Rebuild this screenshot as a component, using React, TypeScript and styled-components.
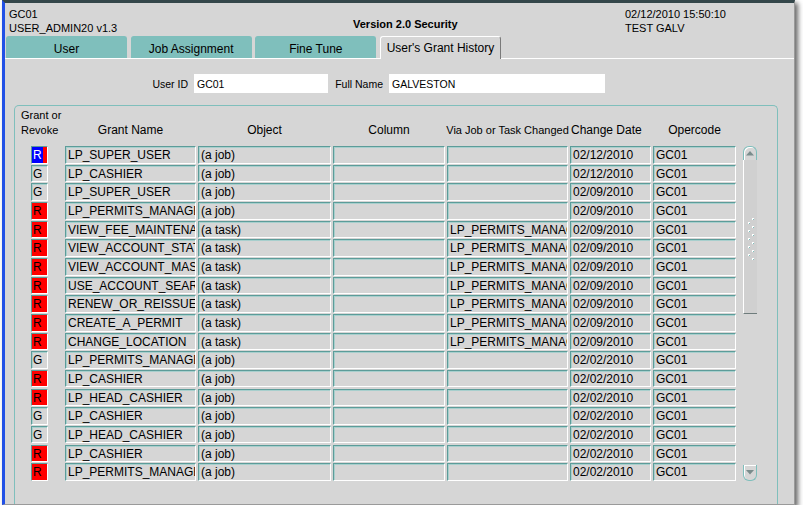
import React from "react";
import styled, { createGlobalStyle } from "styled-components";

const GlobalStyle = createGlobalStyle`
  html, body { margin: 0; padding: 0; background: #ffffff; }
  body { font-family: "Liberation Sans", Arial, sans-serif; color: #000; }
  * { box-sizing: border-box; }
`;

const BG = "#d6d6d6";
const TEAL = "#7fbfbc";
const TEAL_DARK = "#5c9c99";
const COLS = "43px 131px 133px 112px 121px 81px 83px";

const Window = styled.div`
  margin-left: 2px;
  width: 793px;
  height: 505px;
  background: ${BG};
  border-top: 3px solid #34474a;
  border-left: 3px solid #2150e6;
  border-right: 1px solid #9a9a9a;
  border-bottom: 1px solid #9a9a9a;
  box-shadow: 3px 3px 5px rgba(0, 0, 0, 0.6);
  display: flex;
  flex-direction: column;
  overflow: hidden;
`;

const Header = styled.div`
  display: grid;
  grid-template-columns: 344px 272px 1fr;
  height: 33px;
  padding: 4px 0 0 4px;
  font-size: 11px;
  line-height: 14px;
`;

const InfoBlock = styled.div`
  display: flex;
  flex-direction: column;
`;

const Title = styled.div`
  font-weight: bold;
  padding-top: 10px;
`;

const TabStrip = styled.div`
  display: flex;
  align-items: flex-end;
  height: 23px;
  padding-left: 1px;
  border-bottom: 1px solid #ffffff;
`;

const Tab = styled.div<{ $active?: boolean }>`
  width: 121px;
  margin-right: 3.67px;
  height: ${(p) => (p.$active ? "23px" : "22px")};
  margin-bottom: ${(p) => (p.$active ? "-1px" : "0")};
  background: ${(p) => (p.$active ? BG : TEAL)};
  border-radius: 3px 3px 0 0;
  border-top: 1px solid ${(p) => (p.$active ? "#ffffff" : TEAL)};
  border-left: 1px solid ${(p) => (p.$active ? "#ffffff" : TEAL)};
  border-right: 1px solid ${(p) => (p.$active ? "#7a7a7a" : TEAL)};
  display: flex;
  align-items: center;
  justify-content: center;
  font-size: 12px;
  padding-top: ${(p) => (p.$active ? "0" : "2px")};
`;

const Panel = styled.div`
  flex: 1;
  display: flex;
  flex-direction: column;
  padding-top: 15px;
  min-height: 0;
`;

const IdRow = styled.div`
  display: grid;
  grid-template-columns: 40px 134px 49px 216px;
  column-gap: 6px;
  padding-left: 143px;
  height: 19px;
  align-items: center;
`;

const IdLabel = styled.div`
  font-size: 10.5px;
  text-align: right;
  white-space: nowrap;
`;

const IdInput = styled.div`
  background: #ffffff;
  height: 19px;
  font-size: 10.5px;
  line-height: 20px;
  padding-left: 3px;
`;

const GroupBox = styled.div`
  flex: 1;
  margin: 12px 0 0 9px;
  width: 764px;
  border: 1px solid ${TEAL};
  border-bottom: none;
  border-radius: 5px 5px 0 0;
  padding: 2px 0 0 5px;
  display: flex;
`;

const Table = styled.div`
  display: flex;
  flex-direction: column;
`;

const HeadRow = styled.div`
  display: grid;
  grid-template-columns: ${COLS};
  column-gap: 2px;
  height: 30px;
  margin-bottom: 8px;
`;

const HeadCell = styled.div<{ $align?: string; $size?: number }>`
  display: flex;
  align-items: flex-end;
  justify-content: ${(p) => p.$align || "center"};
  font-size: ${(p) => p.$size || 12}px;
  line-height: 15px;
  white-space: nowrap;
  padding-left: ${(p) => (p.$align === "flex-start" ? "1px" : "0")};
  padding-bottom: 1px;
`;

const GrantHead = styled.div`
  font-size: 11px;
  line-height: 15px;
`;

const Row = styled.div`
  display: grid;
  grid-template-columns: ${COLS};
  column-gap: 2px;
  height: 18.667px;
  align-items: start;
`;

const Field = styled.div`
  height: 17.6px;
  background: ${BG};
  border-top: 1px solid ${TEAL_DARK};
  border-left: 1px solid ${TEAL_DARK};
  border-right: 1px solid #ffffff;
  border-bottom: 1px solid #ffffff;
  box-shadow: inset 1px 1px 0 #a8cfcd;
  font-size: 12px;
  line-height: 16px;
  padding-left: 2px;
  white-space: nowrap;
  overflow: hidden;
`;

const GrantBox = styled(Field)<{ $revoke?: boolean }>`
  margin-left: 11px;
  width: 17px;
  padding-left: 1px;
  background: ${(p) => (p.$revoke ? "#ff0000" : BG)};
  box-shadow: ${(p) => (p.$revoke ? "none" : "inset 1px 1px 0 #a8cfcd")};
`;

const Selected = styled.span`
  display: inline-block;
  background: #0000ff;
  color: #ffffff;
  padding: 0 1px 0 1px;
  margin-left: -1px;
`;

const Scrollbar = styled.div`
  margin: 38px 0 0 7px;
  width: 14px;
  height: 335px;
  display: flex;
  flex-direction: column;
`;

const ScrollButton = styled.div<{ $down?: boolean }>`
  height: ${(p) => (p.$down ? "16px" : "14px")};
  border: 1px solid ${TEAL};
  border-top: ${(p) => (p.$down ? "none" : `1px solid ${TEAL}`)};
  border-bottom: ${(p) => (p.$down ? `1px solid ${TEAL}` : "none")};
  border-radius: ${(p) => (p.$down ? "0 0 6px 6px" : "6px 6px 0 0")};
  box-shadow: inset 1px 1px 0 #ffffff;
  display: flex;
  align-items: center;
  justify-content: center;
`;

const Thumb = styled.div`
  height: 154px;
  background: #d0d0d0;
  border-left: 1px solid #ffffff;
  border-bottom: 1px solid #6e7c7c;
  display: flex;
  align-items: center;
  justify-content: center;
  padding-top: 4px;
`;

const Track = styled.div`
  flex: 1;
`;

type RowData = [string, string, string, string, string, string, string];

const rows: RowData[] = [
  ["R*", "LP_SUPER_USER", "(a job)", "", "", "02/12/2010", "GC01"],
  ["G", "LP_CASHIER", "(a job)", "", "", "02/12/2010", "GC01"],
  ["G", "LP_SUPER_USER", "(a job)", "", "", "02/09/2010", "GC01"],
  ["R", "LP_PERMITS_MANAGER", "(a job)", "", "", "02/09/2010", "GC01"],
  ["R", "VIEW_FEE_MAINTENANCE", "(a task)", "", "LP_PERMITS_MANAGER", "02/09/2010", "GC01"],
  ["R", "VIEW_ACCOUNT_STATUS", "(a task)", "", "LP_PERMITS_MANAGER", "02/09/2010", "GC01"],
  ["R", "VIEW_ACCOUNT_MASTER", "(a task)", "", "LP_PERMITS_MANAGER", "02/09/2010", "GC01"],
  ["R", "USE_ACCOUNT_SEARCH", "(a task)", "", "LP_PERMITS_MANAGER", "02/09/2010", "GC01"],
  ["R", "RENEW_OR_REISSUE", "(a task)", "", "LP_PERMITS_MANAGER", "02/09/2010", "GC01"],
  ["R", "CREATE_A_PERMIT", "(a task)", "", "LP_PERMITS_MANAGER", "02/09/2010", "GC01"],
  ["R", "CHANGE_LOCATION", "(a task)", "", "LP_PERMITS_MANAGER", "02/09/2010", "GC01"],
  ["G", "LP_PERMITS_MANAGER", "(a job)", "", "", "02/02/2010", "GC01"],
  ["R", "LP_CASHIER", "(a job)", "", "", "02/02/2010", "GC01"],
  ["R", "LP_HEAD_CASHIER", "(a job)", "", "", "02/02/2010", "GC01"],
  ["G", "LP_CASHIER", "(a job)", "", "", "02/02/2010", "GC01"],
  ["G", "LP_HEAD_CASHIER", "(a job)", "", "", "02/02/2010", "GC01"],
  ["R", "LP_CASHIER", "(a job)", "", "", "02/02/2010", "GC01"],
  ["R", "LP_PERMITS_MANAGER", "(a job)", "", "", "02/02/2010", "GC01"],
];

const Grip = () => {
  const left = [217, 225, 233, 241, 249];
  const right = [213, 221, 229, 237, 245, 253];
  return (
    <svg width="10" height="46" viewBox="0 0 10 46">
      {left.map((y) => (
        <g key={"l" + y}>
          <rect x="2" y={y - 211} width="2" height="2" fill="#ffffff" />
          <rect x="3" y={y - 210} width="1" height="1" fill="#7fbfbc" />
        </g>
      ))}
      {right.map((y) => (
        <g key={"r" + y}>
          <rect x="6" y={y - 211} width="2" height="2" fill="#ffffff" />
          <rect x="7" y={y - 210} width="1" height="1" fill="#7fbfbc" />
        </g>
      ))}
    </svg>
  );
};

const Arrow = ({ down }: { down?: boolean }) => (
  <svg width="8" height="5" viewBox="0 0 8 5">
    <path d={down ? "M0 0 H8 L4 4.5 Z" : "M0 4.5 H8 L4 0 Z"} fill="#7a8c8c" />
  </svg>
);

export default function App() {
  return (
    <>
      <GlobalStyle />
      <Window>
        <Header>
          <InfoBlock>
            <span>GC01</span>
            <span>USER_ADMIN20 v1.3</span>
          </InfoBlock>
          <Title>Version 2.0 Security</Title>
          <InfoBlock>
            <span>02/12/2010 15:50:10</span>
            <span>TEST GALV</span>
          </InfoBlock>
        </Header>
        <TabStrip>
          <Tab>User</Tab>
          <Tab>Job Assignment</Tab>
          <Tab>Fine Tune</Tab>
          <Tab $active>User's Grant History</Tab>
        </TabStrip>
        <Panel>
          <IdRow>
            <IdLabel>User ID</IdLabel>
            <IdInput>GC01</IdInput>
            <IdLabel>Full Name</IdLabel>
            <IdInput>GALVESTON</IdInput>
          </IdRow>
          <GroupBox>
            <Table>
              <HeadRow>
                <HeadCell $align="flex-start">
                  <GrantHead>
                    Grant or
                    <br />
                    Revoke
                  </GrantHead>
                </HeadCell>
                <HeadCell>Grant Name</HeadCell>
                <HeadCell>Object</HeadCell>
                <HeadCell>Column</HeadCell>
                <HeadCell $size={11}>Via Job or Task Changed</HeadCell>
                <HeadCell $align="flex-start">Change Date</HeadCell>
                <HeadCell>Opercode</HeadCell>
              </HeadRow>
              {rows.map((r, i) => {
                const selected = r[0] === "R*";
                const revoke = r[0].startsWith("R");
                return (
                  <Row key={i}>
                    <GrantBox $revoke={revoke}>
                      {selected ? <Selected>R</Selected> : r[0]}
                    </GrantBox>
                    <Field>{r[1]}</Field>
                    <Field>{r[2]}</Field>
                    <Field>{r[3]}</Field>
                    <Field>{r[4]}</Field>
                    <Field>{r[5]}</Field>
                    <Field>{r[6]}</Field>
                  </Row>
                );
              })}
            </Table>
            <Scrollbar>
              <ScrollButton>
                <Arrow />
              </ScrollButton>
              <Thumb>
                <Grip />
              </Thumb>
              <Track />
              <ScrollButton $down>
                <Arrow down />
              </ScrollButton>
            </Scrollbar>
          </GroupBox>
        </Panel>
      </Window>
    </>
  );
}
